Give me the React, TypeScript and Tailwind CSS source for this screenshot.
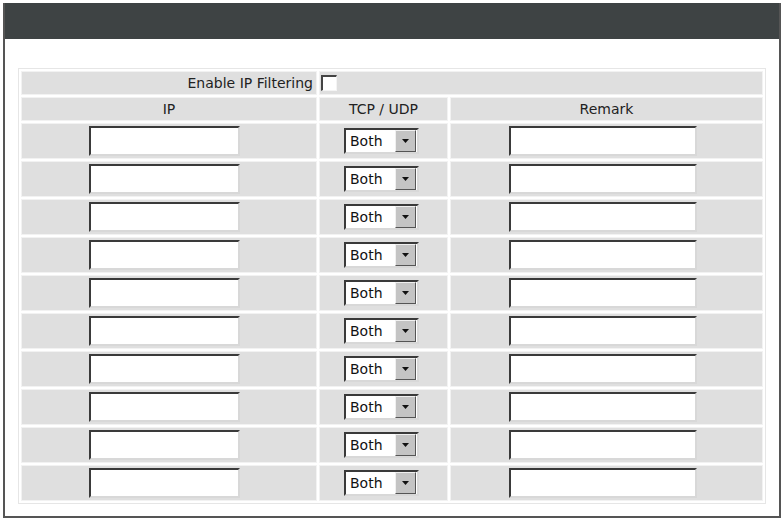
export default function App() {
  const rows = Array.from({ length: 10 }, (_, i) => i)

  return (
    <div className="w-[783px] h-[520px] bg-white pt-[3px] pl-[3px] font-['Tahoma','DejaVu_Sans',sans-serif] text-[14px] text-[#222]">
      <div className="w-[778px] h-[515px] border-l-2 border-r-2 border-b-2 border-[#555] bg-white">
        <div className="h-[36px] bg-[#3e4344]" />
        <div className="pt-[29px] pl-[13px]">
          <table className="w-[748px] border-separate border-spacing-[2px] border border-[#e6e6e6]">
            <tbody>
              <tr className="h-[24px]">
                <td className="w-[296px] bg-[#dfdfdf] border border-[#f2f2f2] text-right pr-[3px] leading-none">
                  Enable IP Filtering
                </td>
                <td colSpan={2} className="bg-[#dfdfdf] border border-[#f2f2f2] pl-[1px]">
                  <div className="w-[16px] h-[16px] bg-white border-t-2 border-l-2 border-t-[#444] border-l-[#444] border-r border-b border-r-[#f4f4f4] border-b-[#f4f4f4]" />
                </td>
              </tr>
              <tr className="h-[24px]">
                <td className="bg-[#dfdfdf] border border-[#f2f2f2] text-center leading-none">IP</td>
                <td className="w-[129px] bg-[#dfdfdf] border border-[#f2f2f2] text-center leading-none">TCP / UDP</td>
                <td className="bg-[#dfdfdf] border border-[#f2f2f2] text-center leading-none">Remark</td>
              </tr>
              {rows.map((i) => (
                <tr key={i} className="h-[36px]">
                  <td className="bg-[#dfdfdf] border border-[#f2f2f2]">
                    <div className="ml-[67px] w-[151px] h-[30px] bg-white border-t-2 border-l-2 border-t-[#3a3a3a] border-l-[#3a3a3a] border-r-2 border-b-2 border-r-[#d8d8d8] border-b-[#d8d8d8]" />
                  </td>
                  <td className="bg-[#dfdfdf] border border-[#f2f2f2]">
                    <div className="ml-[24px] w-[75px] h-[26px] flex items-center bg-white border-t-2 border-l-2 border-t-[#3a3a3a] border-l-[#3a3a3a] border-r-2 border-b-2 border-r-[#d8d8d8] border-b-[#d8d8d8]">
                      <span className="flex-1 pl-[4px] text-[14px] leading-none text-[#111]">Both</span>
                      <div className="w-[21px] h-[22px] mr-px bg-[#c4c4c4] border-t border-l border-t-[#f0f0f0] border-l-[#f0f0f0] border-r border-b border-r-[#555] border-b-[#555] flex items-center justify-center">
                        <svg width="7" height="4" viewBox="0 0 7 4">
                          <path d="M0 0h7L3.5 4z" fill="#111" />
                        </svg>
                      </div>
                    </div>
                  </td>
                  <td className="bg-[#dfdfdf] border border-[#f2f2f2]">
                    <div className="ml-[58px] w-[188px] h-[30px] bg-white border-t-2 border-l-2 border-t-[#3a3a3a] border-l-[#3a3a3a] border-r-2 border-b-2 border-r-[#d8d8d8] border-b-[#d8d8d8]" />
                  </td>
                </tr>
              ))}
            </tbody>
          </table>
        </div>
      </div>
    </div>
  )
}
